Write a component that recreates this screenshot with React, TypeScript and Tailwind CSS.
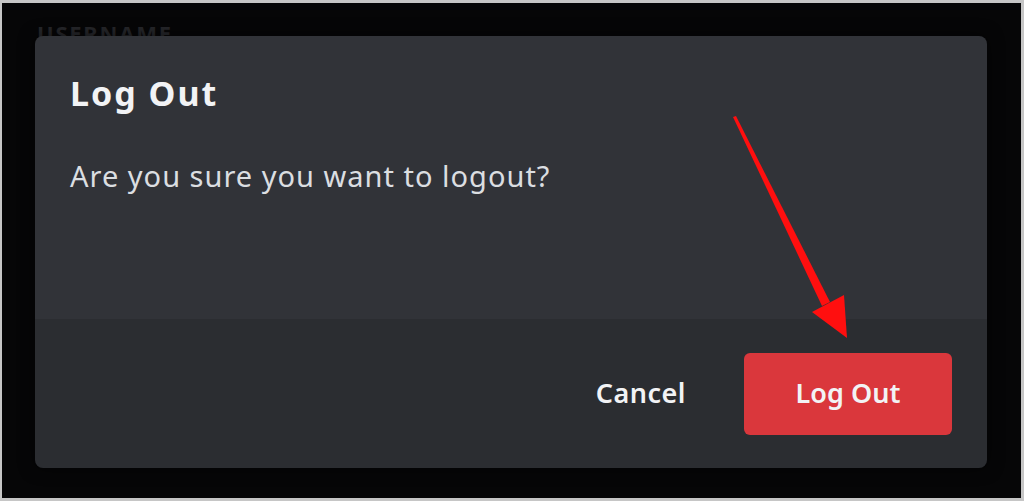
export default function App() {
  return (
    <div className="h-[501px] w-[1024px] bg-[#c6c6c6] pt-[3px] pl-[2px] pr-[3px] pb-[3px] font-['Noto_Sans',sans-serif]">
      <div className="relative h-full w-full overflow-hidden bg-[#060607]">
        {/* content behind the modal */}
        <div className="pl-[35px] pt-[19px] text-[22px] font-bold uppercase leading-none tracking-[0.08em] text-[#26272b]">
          Username
        </div>

        {/* Modal */}
        <div className="absolute left-[33px] top-[33px] flex h-[432px] w-[952px] flex-col overflow-hidden rounded-[8px] shadow-[0_0_16px_rgba(0,0,0,0.6)]">
          <div className="flex h-[283px] flex-col bg-[#313338] px-[35px] pt-[40px]">
            <h1 className="text-[34px] font-bold leading-none tracking-[2px] text-[#f2f3f5]">Log Out</h1>
            <p className="mt-[51px] text-[29px] leading-none tracking-[1px] text-[#dbdee1]">
              Are you sure you want to logout?
            </p>
          </div>
          <div className="flex flex-1 items-center justify-end gap-[58px] bg-[#2b2d31] px-[35px]">
            <button className="text-[27px] font-semibold tracking-[0.5px] text-[#f2f3f5]">Cancel</button>
            <button className="h-[82px] w-[208px] rounded-[6px] bg-[#da373c] text-[27px] font-semibold text-[#f2f3f5]">
              Log Out
            </button>
          </div>
        </div>

        {/* annotation arrow */}
        <svg
          className="pointer-events-none absolute left-0 top-0"
          width="1019"
          height="495"
          viewBox="2 3 1019 495"
        >
          <polygon points="733,117 736,116 830,302 822,306" fill="#ff0f0f" />
          <polygon points="812,312 844,295 847,338" fill="#ff0f0f" />
        </svg>
      </div>
    </div>
  );
}
